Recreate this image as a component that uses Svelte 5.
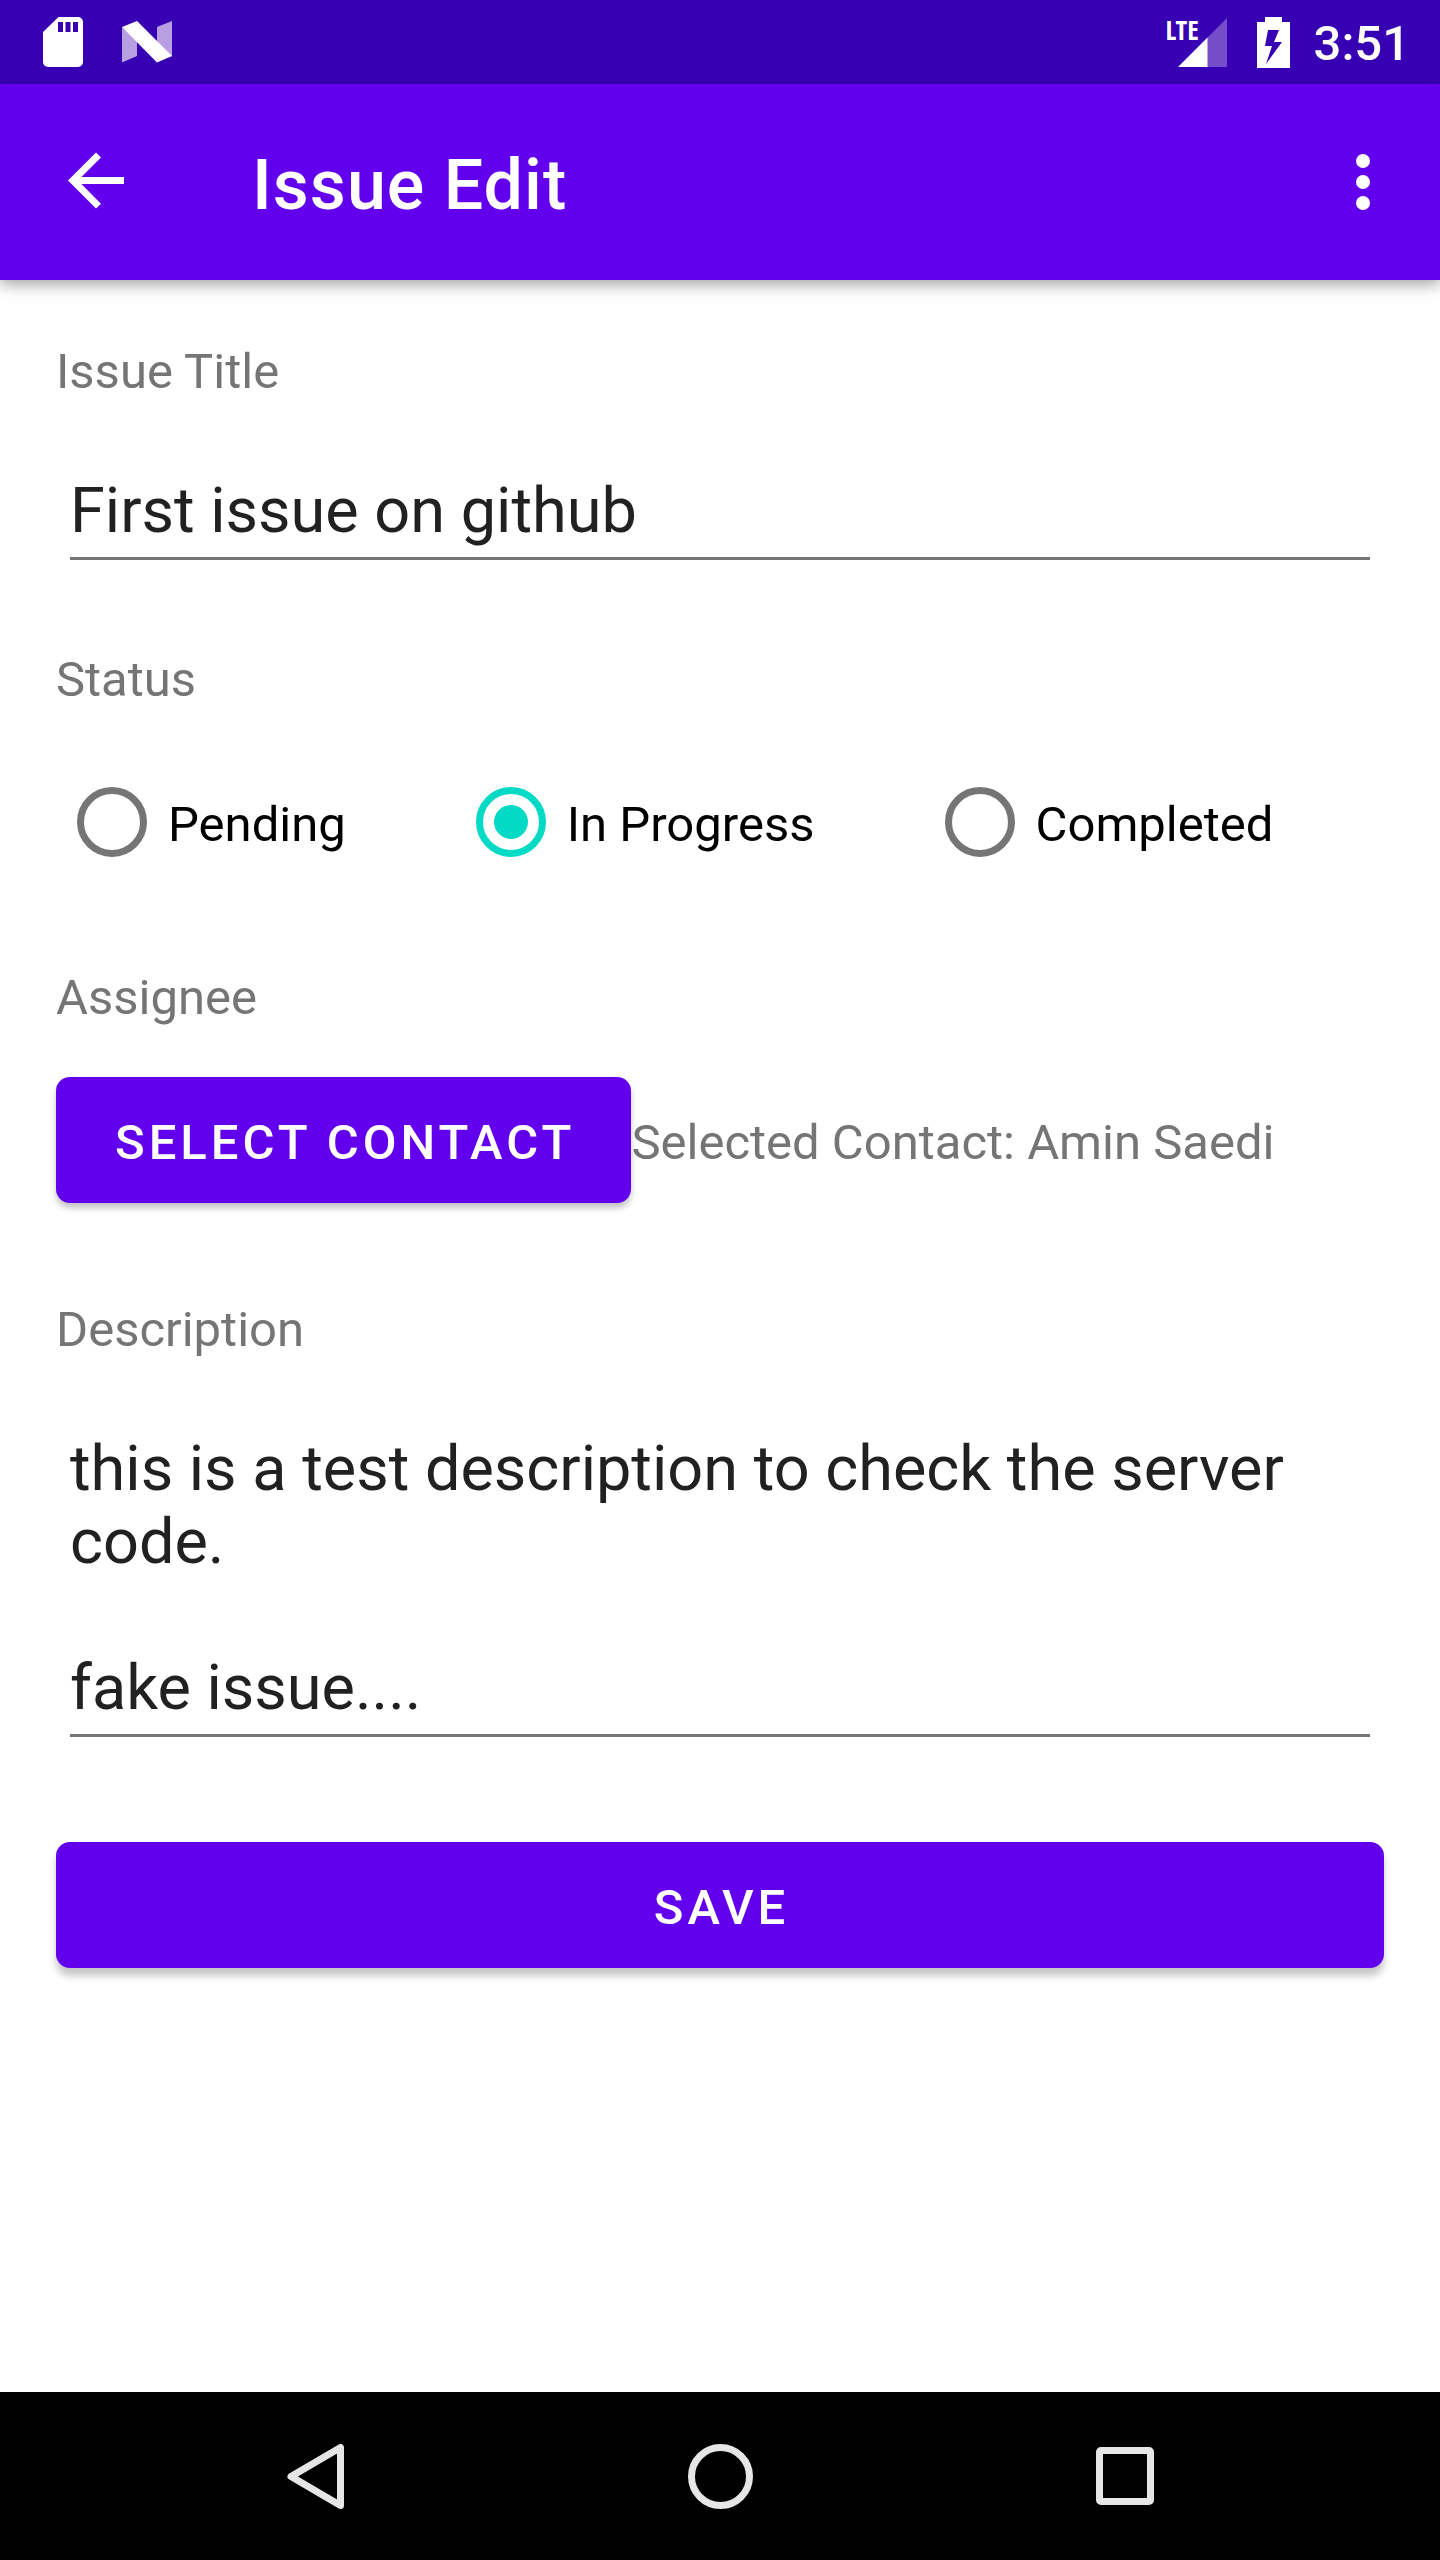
<script>
  const statuses = ['Pending', 'In Progress', 'Completed'];
  let status = $state('In Progress');
  let title = $state('First issue on github');
  let description = $state('this is a test description to check the server code.\n\nfake issue....');
</script>

<div class="screen">
  <div class="status-bar">
    <div class="notifications">
      <svg class="sd" width="40" height="50" viewBox="0 0 40 50" aria-hidden="true">
        <path fill="#fff" fill-rule="evenodd" d="M15.500 0H35a5 5 0 0 1 5 5v40a5 5 0 0 1-5 5H5a5 5 0 0 1-5-5V15zM15 5v10h5V5zM22.500 5v10h5V5zM30 5v10h5V5z" />
      </svg>
      <svg width="50" height="42" viewBox="0 0 50 42" aria-hidden="true">
        <path fill="#b79fe2" d="M0 6l15 14v15L0 41.500zM35 6l15-6v36L35 21z" />
        <path fill="#fff" d="M0 6L15 0l35 35-15 6.500z" />
      </svg>
    </div>
    <div class="system">
      <div class="signal">
        <span class="lte">LTE</span>
        <svg width="49" height="49" viewBox="0 0 49 49" aria-hidden="true">
          <path fill="#744dca" d="M49 0v49H29V20z" />
          <path fill="#fff" d="M0 49l29.500-29.500V49z" />
        </svg>
      </div>
      <svg class="battery" width="33" height="51" viewBox="0 0 33 51" aria-hidden="true">
        <path fill="#fff" fill-rule="evenodd" d="M8 0h17v5h8v46H0V5h8zM11 13l-3 16h7l-6 18 16-22h-8l5-12z" />
      </svg>
      <time>3:51</time>
    </div>
  </div>

  <header>
    <button class="icon-button" aria-label="Back">
      <svg width="84" height="84" viewBox="0 0 24 24" aria-hidden="true">
        <path fill="#fff" d="M20 10.600H7.830l5.590-5.590L12 3.600l-8 8 8 8 1.410-1.410-5.580-5.590H20z" />
      </svg>
    </button>
    <h1>Issue Edit</h1>
    <button class="icon-button" aria-label="More options">
      <svg width="84" height="84" viewBox="0 0 24 24" aria-hidden="true">
        <g fill="#fff"><circle cx="12" cy="6" r="2" /><circle cx="12" cy="12" r="2" /><circle cx="12" cy="18" r="2" /></g>
      </svg>
    </button>
  </header>

  <main>
    <div class="field">
      <label class="caption" for="title">Issue Title</label>
      <input id="title" class="entry" type="text" bind:value={title} />
    </div>

    <fieldset>
      <legend class="caption">Status</legend>
      <div class="options">
        {#each statuses as name}
          <label class="option">
            <input type="radio" name="status" value={name} bind:group={status} />
            <span>{name}</span>
          </label>
        {/each}
      </div>
    </fieldset>

    <section class="assignee">
      <div class="caption">Assignee</div>
      <div class="contact">
        <button class="action">SELECT CONTACT</button>
        <span class="selected">Selected Contact: Amin Saedi</span>
      </div>
    </section>

    <div class="field">
      <label class="caption" for="description">Description</label>
      <textarea id="description" class="entry" rows="4" bind:value={description}></textarea>
    </div>

    <button class="action save">SAVE</button>
  </main>

  <nav>
    <button aria-label="Back">
      <svg width="70" height="70" viewBox="0 0 70 70" aria-hidden="true">
        <path fill="none" stroke="#e6e6e6" stroke-width="7" stroke-linejoin="round" d="M11 35.500L60.500 6.500v58z" />
      </svg>
    </button>
    <button aria-label="Home">
      <svg width="70" height="70" viewBox="0 0 70 70" aria-hidden="true">
        <circle cx="35.500" cy="35.500" r="29" fill="none" stroke="#e6e6e6" stroke-width="7" />
      </svg>
    </button>
    <button aria-label="Recent apps">
      <svg width="70" height="70" viewBox="0 0 70 70" aria-hidden="true">
        <path fill="#e6e6e6" fill-rule="evenodd" d="M11 6h48a5 5 0 0 1 5 5v48a5 5 0 0 1-5 5H11a5 5 0 0 1-5-5V11a5 5 0 0 1 5-5zM13 13v44h44V13z" />
      </svg>
    </button>
  </nav>
</div>

<style>
  :global(body) {
    margin: 0;
    background: #fff;
  }

  .screen,
  .screen * {
    box-sizing: border-box;
  }

  .screen {
    display: flex;
    flex-direction: column;
    min-height: 100vh;
    font-family: Roboto, "Noto Sans", sans-serif;
    font-size: 49px;
  }

  svg {
    display: block;
    flex: none;
  }

  button {
    border: 0;
    padding: 0;
    background: none;
    font: inherit;
    cursor: pointer;
  }

  .status-bar {
    display: flex;
    justify-content: space-between;
    align-items: center;
    height: 84px;
    padding: 0 30px 0 43px;
    background: #3700b3;
    color: #fff;
  }

  .notifications,
  .system {
    display: flex;
    align-items: center;
  }

  .notifications {
    gap: 39px;
  }

  .signal {
    position: relative;
    padding-left: 12px;
    margin-right: 30px;
  }

  .lte {
    position: absolute;
    left: 0;
    top: 0;
    font: 700 27px/24px "Open Sans Condensed", "Roboto Condensed", "Liberation Sans Narrow", Roboto, sans-serif;
  }

  .battery {
    margin-right: 24px;
  }

  time {
    padding-top: 4px;
    font-weight: 500;
    line-height: 56px;
  }

  header {
    display: flex;
    align-items: center;
    height: 196px;
    padding: 0 35px 0 54px;
    background: #6200ee;
    color: #fff;
    box-shadow: 0 5px 14px rgba(0, 0, 0, 0.35);
  }

  h1 {
    flex: 1;
    margin: 0;
    padding: 6px 0 0 114px;
    font-size: 70px;
    font-weight: 500;
    line-height: 82px;
    letter-spacing: 1px;
  }

  main {
    flex: 1;
    padding: 56px 56px 112px;
  }

  .field {
    display: flex;
    flex-direction: column;
    gap: 66px;
  }

  .caption {
    padding: 0;
    line-height: 72px;
    color: #757575;
  }

  .entry {
    display: block;
    margin: 0 14px;
    border: 0;
    border-bottom: 3px solid #757575;
    border-radius: 0;
    padding: 0 0 10px;
    background: none;
    outline: 0;
    font: 400 63px/73px Roboto, "Noto Sans", sans-serif;
    color: #212121;
  }

  input.entry {
    height: 86px;
  }

  textarea.entry {
    resize: none;
    overflow: hidden;
  }

  fieldset {
    margin: 84px 0 0;
    border: 0;
    padding: 0;
    min-width: 0;
  }

  .options {
    display: flex;
    gap: 130px;
    padding: 71px 21px 0;
  }

  .option {
    display: flex;
    align-items: flex-start;
    gap: 21px;
    line-height: 76px;
    color: #000;
    white-space: nowrap;
  }

  .option input {
    appearance: none;
    flex: none;
    width: 70px;
    height: 70px;
    margin: 0;
    border: 7px solid #757575;
    border-radius: 50%;
  }

  .option input:checked {
    border-color: #03dac5;
    padding: 11px;
    background: #03dac5 content-box;
  }

  .assignee {
    margin: 99px 0 91px;
  }

  .contact {
    display: flex;
    align-items: center;
    margin-top: 43px;
  }

  .selected {
    padding-top: 4px;
    color: #757575;
  }

  .action {
    height: 126px;
    border-radius: 14px;
    padding: 4px 56px 0 59px;
    background: #6200ee;
    color: #fff;
    font-weight: 500;
    letter-spacing: 4px;
    white-space: nowrap;
    box-shadow: 0 5px 6px rgba(0, 0, 0, 0.24);
  }

  .save {
    display: block;
    width: 100%;
    margin-top: 105px;
    box-shadow: 0 8px 7px rgba(0, 0, 0, 0.22);
  }

  nav {
    display: grid;
    grid-template-columns: repeat(3, 1fr);
    height: 168px;
    padding: 0 113px;
    background: #000;
  }

  nav button {
    display: flex;
    align-items: center;
    justify-content: center;
  }
</style>
